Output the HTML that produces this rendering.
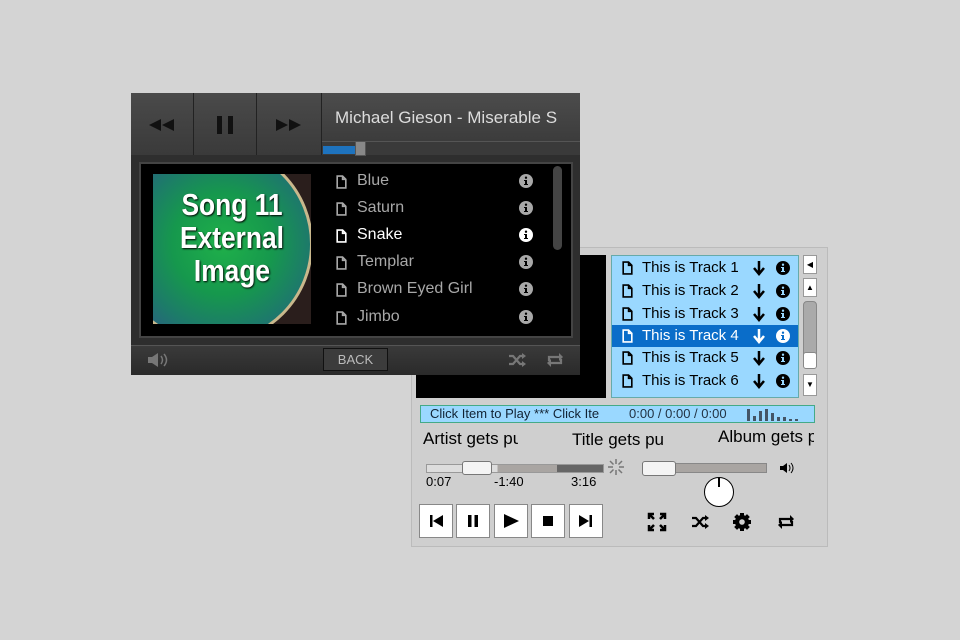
<!DOCTYPE html>
<html><head><style>
*{margin:0;padding:0;box-sizing:border-box}
body{width:960px;height:640px;background:#d4d4d4;position:relative;overflow:hidden;font-family:"Liberation Sans",sans-serif}
.a{position:absolute}
svg{display:block}
.lp{left:411px;top:247px;width:417px;height:300px;background:#cfcfcf;border:1px solid #bbb}
.row{position:absolute;left:0;width:186px;height:22px;font-size:15px;color:#000;line-height:22px}
.row .t{position:absolute;left:30px}
.row svg{position:absolute}
.row.s{background:#0a6dc9;color:#fff}
.btn{position:absolute;top:504px;width:34px;height:34px;background:#fff;border:1px solid #888}
.btn svg{margin:8px}
.dp{left:131px;top:93px;width:449px;height:282px;background:#2e2e2e}
.tb{position:absolute;top:0;height:62px;background:linear-gradient(#4a4a4a,#3a3a3a);border-right:1px solid #222}
.tb svg{position:absolute;left:50%;top:32px;transform:translate(-50%,-50%)}
.li{position:absolute;left:205px;font-size:16px;color:#a8a8a8;height:20px;width:200px}
.li svg{position:absolute}
.li .n{position:absolute;left:21px;top:0;white-space:nowrap}
</style></head><body>
<svg width="0" height="0" style="position:absolute">
<defs>
<symbol id="doc" viewBox="0 0 10 13"><path d="M1 1h5l3 3v8H1z M6 1v3h3" fill="none" stroke="currentColor" stroke-width="1.5"/></symbol>
<symbol id="inf" viewBox="0 0 14 14"><circle cx="7" cy="7" r="7" fill="currentColor"/><path d="M6 6h2v5H6z M7 2.5a1.2 1.2 0 1 1 0 2.4a1.2 1.2 0 1 1 0-2.4z M5 6h3v1H5z M5 10h4v1H5z" fill="var(--bg)"/></symbol>
<symbol id="dn" viewBox="0 0 12 16"><path d="M6 1v12 M1 8l5 6 5-6" fill="none" stroke="currentColor" stroke-width="2.5"/></symbol>
<symbol id="shuf" viewBox="0 0 18 14"><path d="M1 3h4l7 8h3 M1 11h4l7-8h3" fill="none" stroke="currentColor" stroke-width="2.2"/><path d="M14 0l4 3-4 3z M14 8l4 3-4 3z" fill="currentColor"/></symbol>
<symbol id="rep" viewBox="0 0 18 14"><path d="M3 8V4h11 M15 6v4H4" fill="none" stroke="currentColor" stroke-width="2.2"/><path d="M13 0l4 4-4 4z M5 6l-4 4 4 4z" fill="currentColor"/></symbol>
</defs></svg>

<div class="a lp">
  <div class="a" style="left:4px;top:7px;width:190px;height:143px;background:#000"></div>
  <div class="a" style="left:199px;top:7px;width:188px;height:143px;background:#9ad8ff;border:1px solid #6aa;overflow:hidden;--bg:#9ad8ff">
    <div class="row" style="top:1px"><svg style="left:10px;top:4px" width="11" height="14"><use href="#doc"/></svg><span class="t">This is Track 1</span><svg style="left:141px;top:3px" width="12" height="16"><use href="#dn"/></svg><svg style="left:164px;top:4px" width="14" height="14"><use href="#inf"/></svg></div>
    <div class="row" style="top:24px"><svg style="left:10px;top:4px" width="11" height="14"><use href="#doc"/></svg><span class="t">This is Track 2</span><svg style="left:141px;top:3px" width="12" height="16"><use href="#dn"/></svg><svg style="left:164px;top:4px" width="14" height="14"><use href="#inf"/></svg></div>
    <div class="row" style="top:47px"><svg style="left:10px;top:4px" width="11" height="14"><use href="#doc"/></svg><span class="t">This is Track 3</span><svg style="left:141px;top:3px" width="12" height="16"><use href="#dn"/></svg><svg style="left:164px;top:4px" width="14" height="14"><use href="#inf"/></svg></div>
    <div class="row s" style="top:69px;--bg:#0a6dc9"><svg style="left:10px;top:4px" width="11" height="14"><use href="#doc"/></svg><span class="t">This is Track 4</span><svg style="left:141px;top:3px" width="12" height="16"><use href="#dn"/></svg><svg style="left:164px;top:4px" width="14" height="14"><use href="#inf"/></svg></div>
    <div class="row" style="top:91px"><svg style="left:10px;top:4px" width="11" height="14"><use href="#doc"/></svg><span class="t">This is Track 5</span><svg style="left:141px;top:3px" width="12" height="16"><use href="#dn"/></svg><svg style="left:164px;top:4px" width="14" height="14"><use href="#inf"/></svg></div>
    <div class="row" style="top:114px"><svg style="left:10px;top:4px" width="11" height="14"><use href="#doc"/></svg><span class="t">This is Track 6</span><svg style="left:141px;top:3px" width="12" height="16"><use href="#dn"/></svg><svg style="left:164px;top:4px" width="14" height="14"><use href="#inf"/></svg></div>
  </div>
  <div class="a" style="left:391px;top:7px;width:14px;height:19px;background:#fff;border:1px solid #999;font-size:8px;text-align:center;line-height:17px">◀</div>
  <div class="a" style="left:391px;top:30px;width:14px;height:19px;background:#fff;border:1px solid #999;font-size:8px;text-align:center;line-height:17px">▲</div>
  <div class="a" style="left:391px;top:53px;width:14px;height:68px;background:#aaa;border:1px solid #888;border-radius:4px"></div>
  <div class="a" style="left:391px;top:104px;width:14px;height:17px;background:#fff;border:1px solid #888;border-radius:3px"></div>
  <div class="a" style="left:391px;top:126px;width:14px;height:22px;background:#fff;border:1px solid #999;font-size:8px;text-align:center;line-height:20px">▼</div>
  <div class="a" style="left:8px;top:157px;width:395px;height:18px;background:#9ad8ff;border:1px solid #4a8;font-size:13px;line-height:16px;color:#123;overflow:hidden">
    <span class="a" style="left:9px;white-space:nowrap">Click Item to Play *** Click Ite</span>
    <span class="a" style="left:208px;white-space:nowrap;color:#234">0:00 / 0:00 / 0:00</span>
    <svg class="a" style="left:326px;top:2px" width="60" height="13"><g fill="#456"><rect x="0" y="1" width="3" height="12"/><rect x="6" y="8" width="3" height="5"/><rect x="12" y="3" width="3" height="10"/><rect x="18" y="1" width="3" height="12"/><rect x="24" y="5" width="3" height="8"/><rect x="30" y="9" width="3" height="4"/><rect x="36" y="9" width="3" height="4"/><rect x="42" y="11" width="3" height="2"/><rect x="48" y="11" width="3" height="2"/></g></svg>
  </div>
  <div class="a" style="left:11px;top:181px;font-size:17px;width:95px;overflow:hidden;white-space:nowrap">Artist gets pu</div>
  <div class="a" style="left:160px;top:182px;font-size:17px;width:95px;overflow:hidden;white-space:nowrap">Title gets pu</div>
  <div class="a" style="left:306px;top:179px;font-size:17px;width:96px;overflow:hidden;white-space:nowrap">Album gets p</div>
  <div class="a" style="left:14px;top:216px;width:178px;height:9px;background:linear-gradient(90deg,#ddd 0 40%,#a9a5a2 40% 74%,#666 74%);border:1px solid #999"></div>
  <div class="a" style="left:50px;top:213px;width:30px;height:14px;background:#f4f4f4;border:1px solid #777;border-radius:3px"></div>
  <svg class="a" style="left:195px;top:210px" width="18" height="18"><g stroke="#777" stroke-width="1.5"><path d="M9 1v5M9 12v5M1 9h5M12 9h5M3 3l3.5 3.5M11.5 11.5L15 15M15 3l-3.5 3.5M3 15l3.5-3.5"/></g></svg>
  <div class="a" style="left:14px;top:226px;font-size:13px">0:07</div>
  <div class="a" style="left:82px;top:226px;font-size:13px">-1:40</div>
  <div class="a" style="left:159px;top:226px;font-size:13px">3:16</div>
  <div class="a" style="left:230px;top:215px;width:125px;height:10px;background:#a9a5a2;border:1px solid #888"></div>
  <div class="a" style="left:230px;top:213px;width:34px;height:15px;background:#f4f4f4;border:1px solid #777;border-radius:3px"></div>
  <svg class="a" style="left:367px;top:214px" width="16" height="12"><path d="M1 4h3l4-3v10L4 8H1z" fill="#000"/><path d="M10 3q2 3 0 6M12 1q4 5 0 10" fill="none" stroke="#000" stroke-width="1"/></svg>
  <div class="a" style="left:292px;top:229px;width:30px;height:30px;border-radius:50%;background:#fff;border:1.5px solid #000"></div>
  <div class="a" style="left:306px;top:230px;width:2px;height:9px;background:#000"></div>
  <svg class="a" style="left:235px;top:264px" width="20" height="20"><g stroke="#000" stroke-width="2.5" fill="none"><path d="M2 7V2h5M13 2h5v5M18 13v5h-5M7 18H2v-5M2 2l5 5M18 2l-5 5M18 18l-5-5M2 18l5-5"/></g></svg>
  <svg class="a" style="left:279px;top:267px" width="18" height="14"><use href="#shuf"/></svg>
  <svg class="a" style="left:320px;top:264px" width="20" height="20" viewBox="0 0 20 20"><g fill="#000"><circle cx="10" cy="10" r="7"/><g stroke="#000" stroke-width="4"><path d="M10 1v18M1 10h18M3.6 3.6l12.8 12.8M16.4 3.6L3.6 16.4"/></g></g><circle cx="10" cy="10" r="2.8" fill="#cfcfcf"/></svg>
  <svg class="a" style="left:365px;top:267px" width="18" height="14"><use href="#rep"/></svg>
</div>
<div class="btn" style="left:419px"><svg width="16" height="16"><path d="M2 2h2.5v12H2z M15 2v12L5 8z" fill="#000"/></svg></div>
<div class="btn" style="left:456px"><svg width="16" height="16"><path d="M3 2h3.5v12H3z M9.5 2H13v12H9.5z" fill="#000"/></svg></div>
<div class="btn" style="left:494px"><svg width="16" height="16"><path d="M1 1l15 7-15 7z" fill="#000"/></svg></div>
<div class="btn" style="left:531px"><svg width="16" height="16"><path d="M3 3h10v10H3z" fill="#000"/></svg></div>
<div class="btn" style="left:569px"><svg width="16" height="16"><path d="M11.5 2H14v12h-2.5z M1 2v12l10-6z" fill="#000"/></svg></div>

<div class="a dp">
  <div class="tb" style="left:0;width:63px"><svg width="26" height="12"><path d="M12 0v12L0 6z M25 0v12L13 6z" fill="#111"/></svg></div>
  <div class="tb" style="left:63px;width:63px"><svg width="20" height="20"><path d="M2 1h5v18H2z M13 1h5v18h-5z" fill="#111"/></svg></div>
  <div class="tb" style="left:126px;width:65px"><svg width="26" height="12"><path d="M0 0v12l12-6z M13 0v12l12-6z" fill="#111"/></svg></div>
  <div class="a" style="left:191px;top:0;width:258px;height:48px;background:linear-gradient(#4c4c4c,#3c3c3c);color:#ddd;font-size:17px;line-height:50px;padding-left:13px;white-space:nowrap;overflow:hidden">Michael Gieson - Miserable S</div>
  <div class="a" style="left:191px;top:48px;width:258px;height:14px;background:#3a3a3a;border-top:1px solid #555"></div>
  <div class="a" style="left:192px;top:53px;width:36px;height:8px;background:#1e73be"></div>
  <div class="a" style="left:224px;top:48px;width:11px;height:15px;background:#888;border:1px solid #555"></div>
  <div class="a" style="left:8px;top:69px;width:434px;height:176px;background:#000;border:2px solid #444"></div>
  <div class="a" style="left:22px;top:81px;width:158px;height:150px;overflow:hidden;background:#2a1e1c">
    <div class="a" style="left:-40px;top:-30px;width:200px;height:200px;border-radius:50%;background:radial-gradient(circle at 55% 50%,#1fb04a 0,#16984d 35%,#1d7a6a 60%,#2a6080 78%,#3a5070 90%);border:3px solid #c9b88c"></div>
    <div class="a" style="left:0;top:14px;width:158px;color:#fff;font-size:31px;font-weight:bold;text-align:center;line-height:33px;font-family:'Liberation Sans Narrow','Liberation Sans',sans-serif;transform:scaleX(.85);text-shadow:1px 1px 2px #000">Song 11<br>External<br>Image</div>
  </div>
  <div class="li" style="top:79px;--bg:#000"><svg style="left:0;top:3px" width="11" height="14"><use href="#doc"/></svg><span class="n">Blue</span><svg style="left:183px;top:2px" width="14" height="14"><use href="#inf"/></svg></div>
  <div class="li" style="top:106px;--bg:#000"><svg style="left:0;top:3px" width="11" height="14"><use href="#doc"/></svg><span class="n">Saturn</span><svg style="left:183px;top:2px" width="14" height="14"><use href="#inf"/></svg></div>
  <div class="li" style="top:133px;color:#fff;--bg:#000"><svg style="left:0;top:3px" width="11" height="14"><use href="#doc"/></svg><span class="n">Snake</span><svg style="left:183px;top:2px" width="14" height="14"><use href="#inf"/></svg></div>
  <div class="li" style="top:160px;--bg:#000"><svg style="left:0;top:3px" width="11" height="14"><use href="#doc"/></svg><span class="n">Templar</span><svg style="left:183px;top:2px" width="14" height="14"><use href="#inf"/></svg></div>
  <div class="li" style="top:187px;--bg:#000"><svg style="left:0;top:3px" width="11" height="14"><use href="#doc"/></svg><span class="n">Brown Eyed Girl</span><svg style="left:183px;top:2px" width="14" height="14"><use href="#inf"/></svg></div>
  <div class="li" style="top:215px;--bg:#000"><svg style="left:0;top:3px" width="11" height="14"><use href="#doc"/></svg><span class="n">Jimbo</span><svg style="left:183px;top:2px" width="14" height="14"><use href="#inf"/></svg></div>
  <div class="a" style="left:422px;top:73px;width:9px;height:84px;background:#444;border-radius:5px"></div>
  <div class="a" style="left:0;top:252px;width:449px;height:30px;background:linear-gradient(#3a3a3a,#2a2a2a);border-top:1px solid #555"></div>
  <svg class="a" style="left:16px;top:259px" width="22" height="16"><path d="M1 5h4l6-4v14l-6-4H1z" fill="#777"/><path d="M14 4q3 4 0 8M17 2q5 6 0 12" fill="none" stroke="#777" stroke-width="1.5"/></svg>
  <div class="a" style="left:192px;top:255px;width:65px;height:23px;background:#3c3c3c;border:1px solid #111;color:#bbb;font-size:13px;text-align:center;line-height:21px">BACK</div>
  <svg class="a" style="left:377px;top:260px" width="18" height="14" color="#777"><use href="#shuf"/></svg>
  <svg class="a" style="left:415px;top:260px" width="18" height="14" color="#777"><use href="#rep"/></svg>
</div>
</body></html>
